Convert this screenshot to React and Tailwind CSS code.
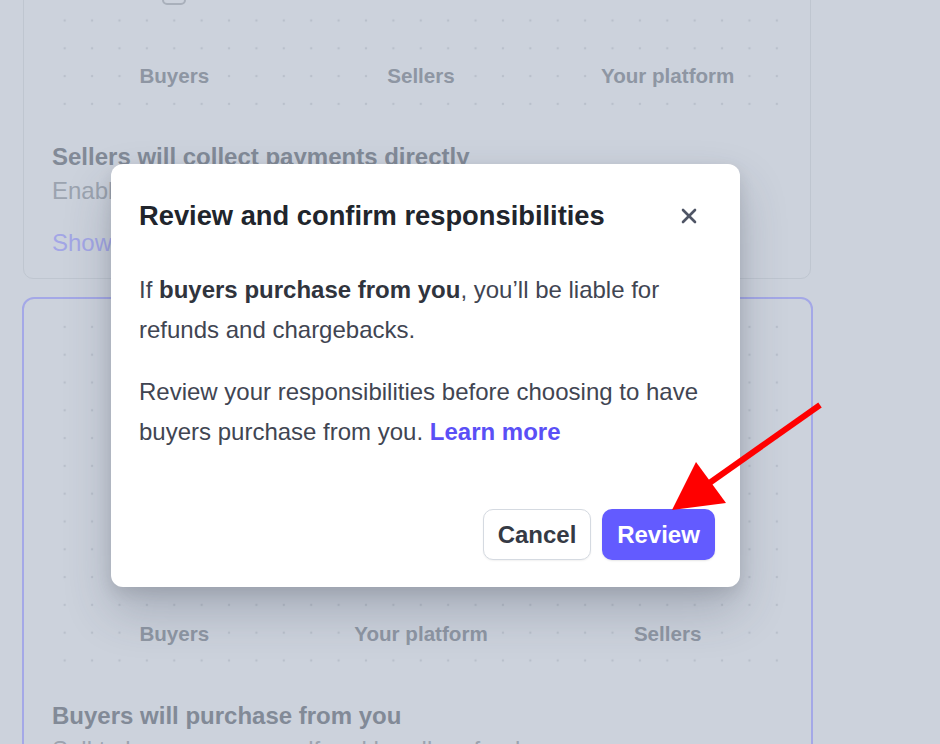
import { X } from "lucide-react";

const dots =
  "bg-[radial-gradient(circle,#b9c0cb_1.2px,transparent_1.6px)] bg-[length:27.4px_27.8px]";

function Labels({ items }) {
  return (
    <div className="grid grid-cols-3">
      {items.map((t) => (
        <div key={t} className="flex justify-center">
          <span className="bg-[#ccd2dc] px-[10px] text-[20.6px] leading-[24px] font-bold text-[#8e96a3]">
            {t}
          </span>
        </div>
      ))}
    </div>
  );
}

export default function App() {
  return (
    <div className="relative w-[940px] h-[744px] overflow-hidden bg-[#ccd2dc] font-['Liberation_Sans',Arial,sans-serif]">
      {/* page behind the dialog */}
      <div className="flex flex-col -mt-[57px]">
        <section className="ml-[23px] w-[788px] border border-[#bfc6d0] rounded-[10px]">
          <div className={`ml-[27px] mt-[6.5px] w-[740px] h-[167px] pt-[30.5px] flex flex-col ${dots}`}>
            <div className="grid grid-cols-3 h-[24px]">
              <div className="flex justify-center">
                <div className="w-[24px] h-[24px] bg-[#ccd2dc] border-2 border-[#a9b0bb] rounded-[5px]" />
              </div>
            </div>
            <div className="mt-[59px]">
              <Labels items={["Buyers", "Sellers", "Your platform"]} />
            </div>
          </div>
          <div className="px-[28px] pb-[17px]">
            <h3 className="mt-[23px] text-[24px] leading-[32px] font-bold text-[#828a97]">
              Sellers will collect payments directly
            </h3>
            <p className="text-[24px] leading-[36px] text-[#9ba3af]">
              Enable sellers to accept payments directly from buyers.
            </p>
            <p className="mt-[16px] text-[24px] leading-[36px] text-[#a3a6e6]">
              Show details
            </p>
          </div>
        </section>

        <section className="mt-[18px] ml-[22px] w-[791px] border-2 border-[#a4a8e7] rounded-[12px]">
          <div className={`ml-[27px] mt-[14px] w-[740px] h-[361.5px] flex flex-col justify-end pb-[28.5px] ${dots}`}>
            <Labels items={["Buyers", "Your platform", "Sellers"]} />
          </div>
          <div className="px-[28px] pb-[20px]">
            <h3 className="mt-[25.5px] text-[24px] leading-[32px] font-bold text-[#828a97]">
              Buyers will purchase from you
            </h3>
            <p className="text-[24px] leading-[36px] text-[#9ba3af]">
              Sell to buyers as yourself and handle refunds.
            </p>
          </div>
        </section>
      </div>

      {/* dialog */}
      <div className="absolute left-[111px] top-[164px] w-[629px] h-[423px] bg-white rounded-[12px] shadow-[0_24px_48px_rgba(50,60,80,0.24),0_6px_16px_rgba(0,0,0,0.1)] flex flex-col">
        <div className="flex items-center justify-between pl-[28px] pr-[35px] pt-[34px]">
          <h2 className="text-[27.3px] leading-[36px] font-bold text-[#21252c]">
            Review and confirm responsibilities
          </h2>
          <button className="w-[32px] h-[32px] flex items-center justify-center text-[#4f5565]">
            <X size={24} strokeWidth={2.6} />
          </button>
        </div>
        <div className="px-[28px] text-[24px] leading-[40px] text-[#414552]">
          <p className="mt-[36px]">
            If <span className="font-bold text-[#30343d]">buyers purchase from you</span>, you’ll be liable for refunds and chargebacks.
          </p>
          <p className="mt-[22px]">
            Review your responsibilities before choosing to have buyers purchase from you.{" "}
            <span className="font-bold text-[#5a4ff6]">Learn more</span>
          </p>
        </div>
        <div className="mt-[57px] flex justify-end gap-[11px] pr-[25px]">
          <button className="w-[108px] h-[51px] rounded-[10px] border border-[#d5dae1] bg-white text-[24px] font-bold text-[#353a44] shadow-[0_1px_2px_rgba(0,0,0,0.06)]">
            Cancel
          </button>
          <button className="w-[113px] h-[51px] rounded-[10px] bg-[#635bff] text-[24px] font-bold text-white shadow-[0_1px_2px_rgba(0,0,0,0.1)]">
            Review
          </button>
        </div>
      </div>

      {/* annotation arrow */}
      <svg className="absolute inset-0 pointer-events-none" width="940" height="744" viewBox="0 0 940 744">
        <line x1="820" y1="405" x2="708" y2="484" stroke="#ff0000" strokeWidth="6" />
        <polygon points="672,510 696,462 726,503" fill="#ff0000" />
      </svg>
    </div>
  );
}
